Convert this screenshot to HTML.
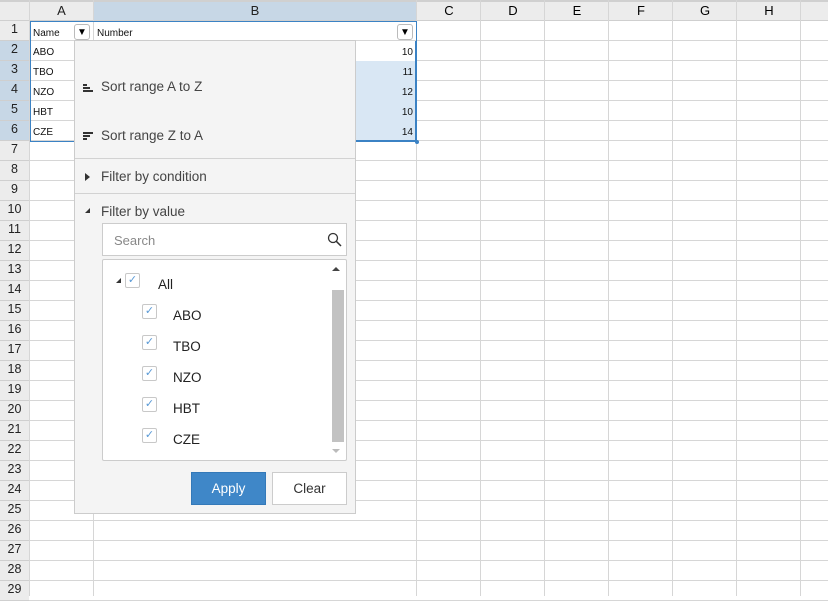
<!DOCTYPE html>
<html><head><style>
*{box-sizing:border-box;margin:0;padding:0}
body{width:828px;height:596px;overflow:hidden;background:#fff;font-family:"Liberation Sans",Arial,sans-serif;position:relative}
.a{position:absolute}
.hl{position:absolute;left:0;top:21px;width:828px;height:580px;background:repeating-linear-gradient(to bottom,transparent 0 19px,#d6d6d6 19px 20px)}
.vl{position:absolute;top:0;width:1px;height:596px;background:#d6d6d6}
.ch{position:absolute;top:0;height:21px;background:#ececec;border-bottom:1px solid #cfcfcf;font-size:13px;color:#222;text-align:center;line-height:21px}
.rh{position:absolute;left:0;width:29px;height:20px;background:#ececec;font-size:12.5px;color:#222;text-align:center;line-height:17px;border-bottom:1px solid #cfcfcf}
.cell{position:absolute;font-size:10px;color:#111;line-height:20px}
.m{font-size:13.5px;color:#444}
.cb{position:absolute;width:15px;height:15px;border:1px solid #c8c8c8;border-radius:2px;background:#fff;color:#5a9ad6;font-size:11px;line-height:13px;text-align:center}
</style></head><body>
<div class="hl"></div>
<div class="a" style="left:0;top:0;width:828px;height:2px;background:#d0d0d0"></div>
<div class="ch" style="left:0;width:29px;top:2px;height:19px"></div>
<div class="ch" style="left:30px;width:63px;top:2px;height:19px;line-height:17px">A</div>
<div class="ch" style="left:94px;width:322px;top:2px;height:19px;line-height:17px;background:#c7d7e6">B</div>
<div class="ch" style="left:417px;width:411px;top:2px;height:19px;background:#ececec"></div>
<div class="a" style="left:417px;top:2px;width:64px;font-size:13px;text-align:center;line-height:17px">C</div>
<div class="a" style="left:481px;top:2px;width:64px;font-size:13px;text-align:center;line-height:17px">D</div>
<div class="a" style="left:545px;top:2px;width:64px;font-size:13px;text-align:center;line-height:17px">E</div>
<div class="a" style="left:609px;top:2px;width:64px;font-size:13px;text-align:center;line-height:17px">F</div>
<div class="a" style="left:673px;top:2px;width:64px;font-size:13px;text-align:center;line-height:17px">G</div>
<div class="a" style="left:737px;top:2px;width:64px;font-size:13px;text-align:center;line-height:17px">H</div>
<div class="vl" style="left:29px"></div><div class="vl" style="left:93px"></div><div class="vl" style="left:416px"></div><div class="vl" style="left:480px"></div><div class="vl" style="left:544px"></div><div class="vl" style="left:608px"></div><div class="vl" style="left:672px"></div><div class="vl" style="left:736px"></div><div class="vl" style="left:800px"></div>
<div id="rows"></div>
<script>
var s='';for(var i=1;i<=29;i++){var y=21+(i-1)*20;var sel=(i>=2&&i<=6);s+='<div class="rh" style="top:'+y+'px;'+(sel?'background:#c7d7e6':'')+'">'+i+'</div>';}
document.getElementById('rows').outerHTML=s;
</script>
<div class="a" style="left:94px;top:61px;width:322px;height:80px;background:#d9e7f4"></div>
<div class="a" style="left:94px;top:41px;width:322px;height:20px;background:#fff"></div>
<div class="a" style="left:30px;top:21px;width:387px;height:121px;border:1px solid #3b82c4"></div>
<div class="a" style="left:415px;top:140px;width:4px;height:4px;background:#3b82c4;border-radius:2px"></div>
<div class="a" style="left:94px;top:41px;width:323px;height:101px;border:2px solid #3b82c4;border-top:0;border-left:0"></div>
<div class="cell" style="left:33px;top:24px">Name</div>
<div class="cell" style="left:97px;top:24px">Number</div>
<div class="a" style="left:74px;top:24px;width:16px;height:16px;border:1px solid #bbb;border-radius:3px;background:#fff;font-size:10px;text-align:center;line-height:15px">▼</div>
<div class="a" style="left:397px;top:24px;width:16px;height:16px;border:1px solid #bbb;border-radius:3px;background:#fff;font-size:10px;text-align:center;line-height:15px">▼</div>
<div class="cell" style="left:33px;top:43px">ABO</div>
<div class="cell" style="left:33px;top:63px">TBO</div>
<div class="cell" style="left:33px;top:83px">NZO</div>
<div class="cell" style="left:33px;top:103px">HBT</div>
<div class="cell" style="left:33px;top:123px">CZE</div>
<div class="cell" style="left:380px;width:33px;text-align:right;top:43px">10</div>
<div class="cell" style="left:380px;width:33px;text-align:right;top:63px">11</div>
<div class="cell" style="left:380px;width:33px;text-align:right;top:83px">12</div>
<div class="cell" style="left:380px;width:33px;text-align:right;top:103px">10</div>
<div class="cell" style="left:380px;width:33px;text-align:right;top:123px">14</div>
<div class="a" style="left:74px;top:40px;width:282px;height:474px;background:#f4f4f4;border:1px solid #ccc">
 <svg class="a" style="left:8px;top:42px" width="12" height="10"><rect x="0" y="1" width="4" height="2" fill="#333"/><rect x="0" y="4" width="7" height="2" fill="#333"/><rect x="0" y="7" width="10" height="2" fill="#333"/></svg>
 <div class="a m" style="left:26px;top:38px">Sort range A to Z</div>
 <svg class="a" style="left:8px;top:90px" width="12" height="10"><rect x="0" y="1" width="10" height="2" fill="#333"/><rect x="0" y="4" width="7" height="2" fill="#333"/><rect x="0" y="7" width="4" height="2" fill="#333"/></svg>
 <div class="a m" style="left:26px;top:87px">Sort range Z to A</div>
 <div class="a" style="left:0;top:117px;width:280px;height:1px;background:#d2d2d2"></div>
 <svg class="a" style="left:10px;top:132px" width="6" height="8"><path d="M0 0L5 4L0 8Z" fill="#333"/></svg>
 <div class="a m" style="left:26px;top:128px">Filter by condition</div>
 <div class="a" style="left:0;top:152px;width:280px;height:1px;background:#d2d2d2"></div>
 <svg class="a" style="left:10px;top:167px" width="6" height="6"><path d="M5 0L5 5L0 5Z" fill="#333"/></svg>
 <div class="a m" style="left:26px;top:163px">Filter by value</div>
 <div class="a" style="left:27px;top:182px;width:245px;height:33px;background:#fff;border:1px solid #ccc"></div>
 <div class="a" style="left:39px;top:192px;font-size:13px;color:#888">Search</div>
 <svg class="a" style="left:252px;top:191px" width="16" height="16"><circle cx="6" cy="6" r="4.5" stroke="#333" stroke-width="1.3" fill="none"/><path d="M9.3 9.3L14 14" stroke="#333" stroke-width="1.5"/></svg>
 <div class="a" style="left:27px;top:218px;width:245px;height:202px;background:#fff;border:1px solid #ccc;border-radius:2px"></div>
 <svg class="a" style="left:257px;top:225px" width="8" height="6"><path d="M0 5L4 1L8 5Z" fill="#444"/></svg>
 <div class="a" style="left:257px;top:249px;width:12px;height:152px;background:#c2c2c2"></div>
 <svg class="a" style="left:257px;top:407px" width="8" height="6"><path d="M0 1L8 1L4 5Z" fill="#bbb"/></svg>
 <svg class="a" style="left:41px;top:237px" width="6" height="6"><path d="M5 0L5 5L0 5Z" fill="#333"/></svg>
 <div class="cb" style="left:50px;top:232px">✓</div><div class="a m" style="left:83px;top:236px;color:#222">All</div>
 <div class="cb" style="left:67px;top:263px">✓</div><div class="a m" style="left:98px;top:267px;color:#222">ABO</div>
 <div class="cb" style="left:67px;top:294px">✓</div><div class="a m" style="left:98px;top:298px;color:#222">TBO</div>
 <div class="cb" style="left:67px;top:325px">✓</div><div class="a m" style="left:98px;top:329px;color:#222">NZO</div>
 <div class="cb" style="left:67px;top:356px">✓</div><div class="a m" style="left:98px;top:360px;color:#222">HBT</div>
 <div class="cb" style="left:67px;top:387px">✓</div><div class="a m" style="left:98px;top:391px;color:#222">CZE</div>
 <div class="a" style="left:116px;top:431px;width:75px;height:33px;background:#3f87c8;border:1px solid #3479b8;color:#fff;font-size:13.5px;text-align:center;line-height:31px">Apply</div>
 <div class="a" style="left:197px;top:431px;width:75px;height:33px;background:#fff;border:1px solid #ccc;color:#333;font-size:13.5px;text-align:center;line-height:31px">Clear</div>
</div>
</body></html>
